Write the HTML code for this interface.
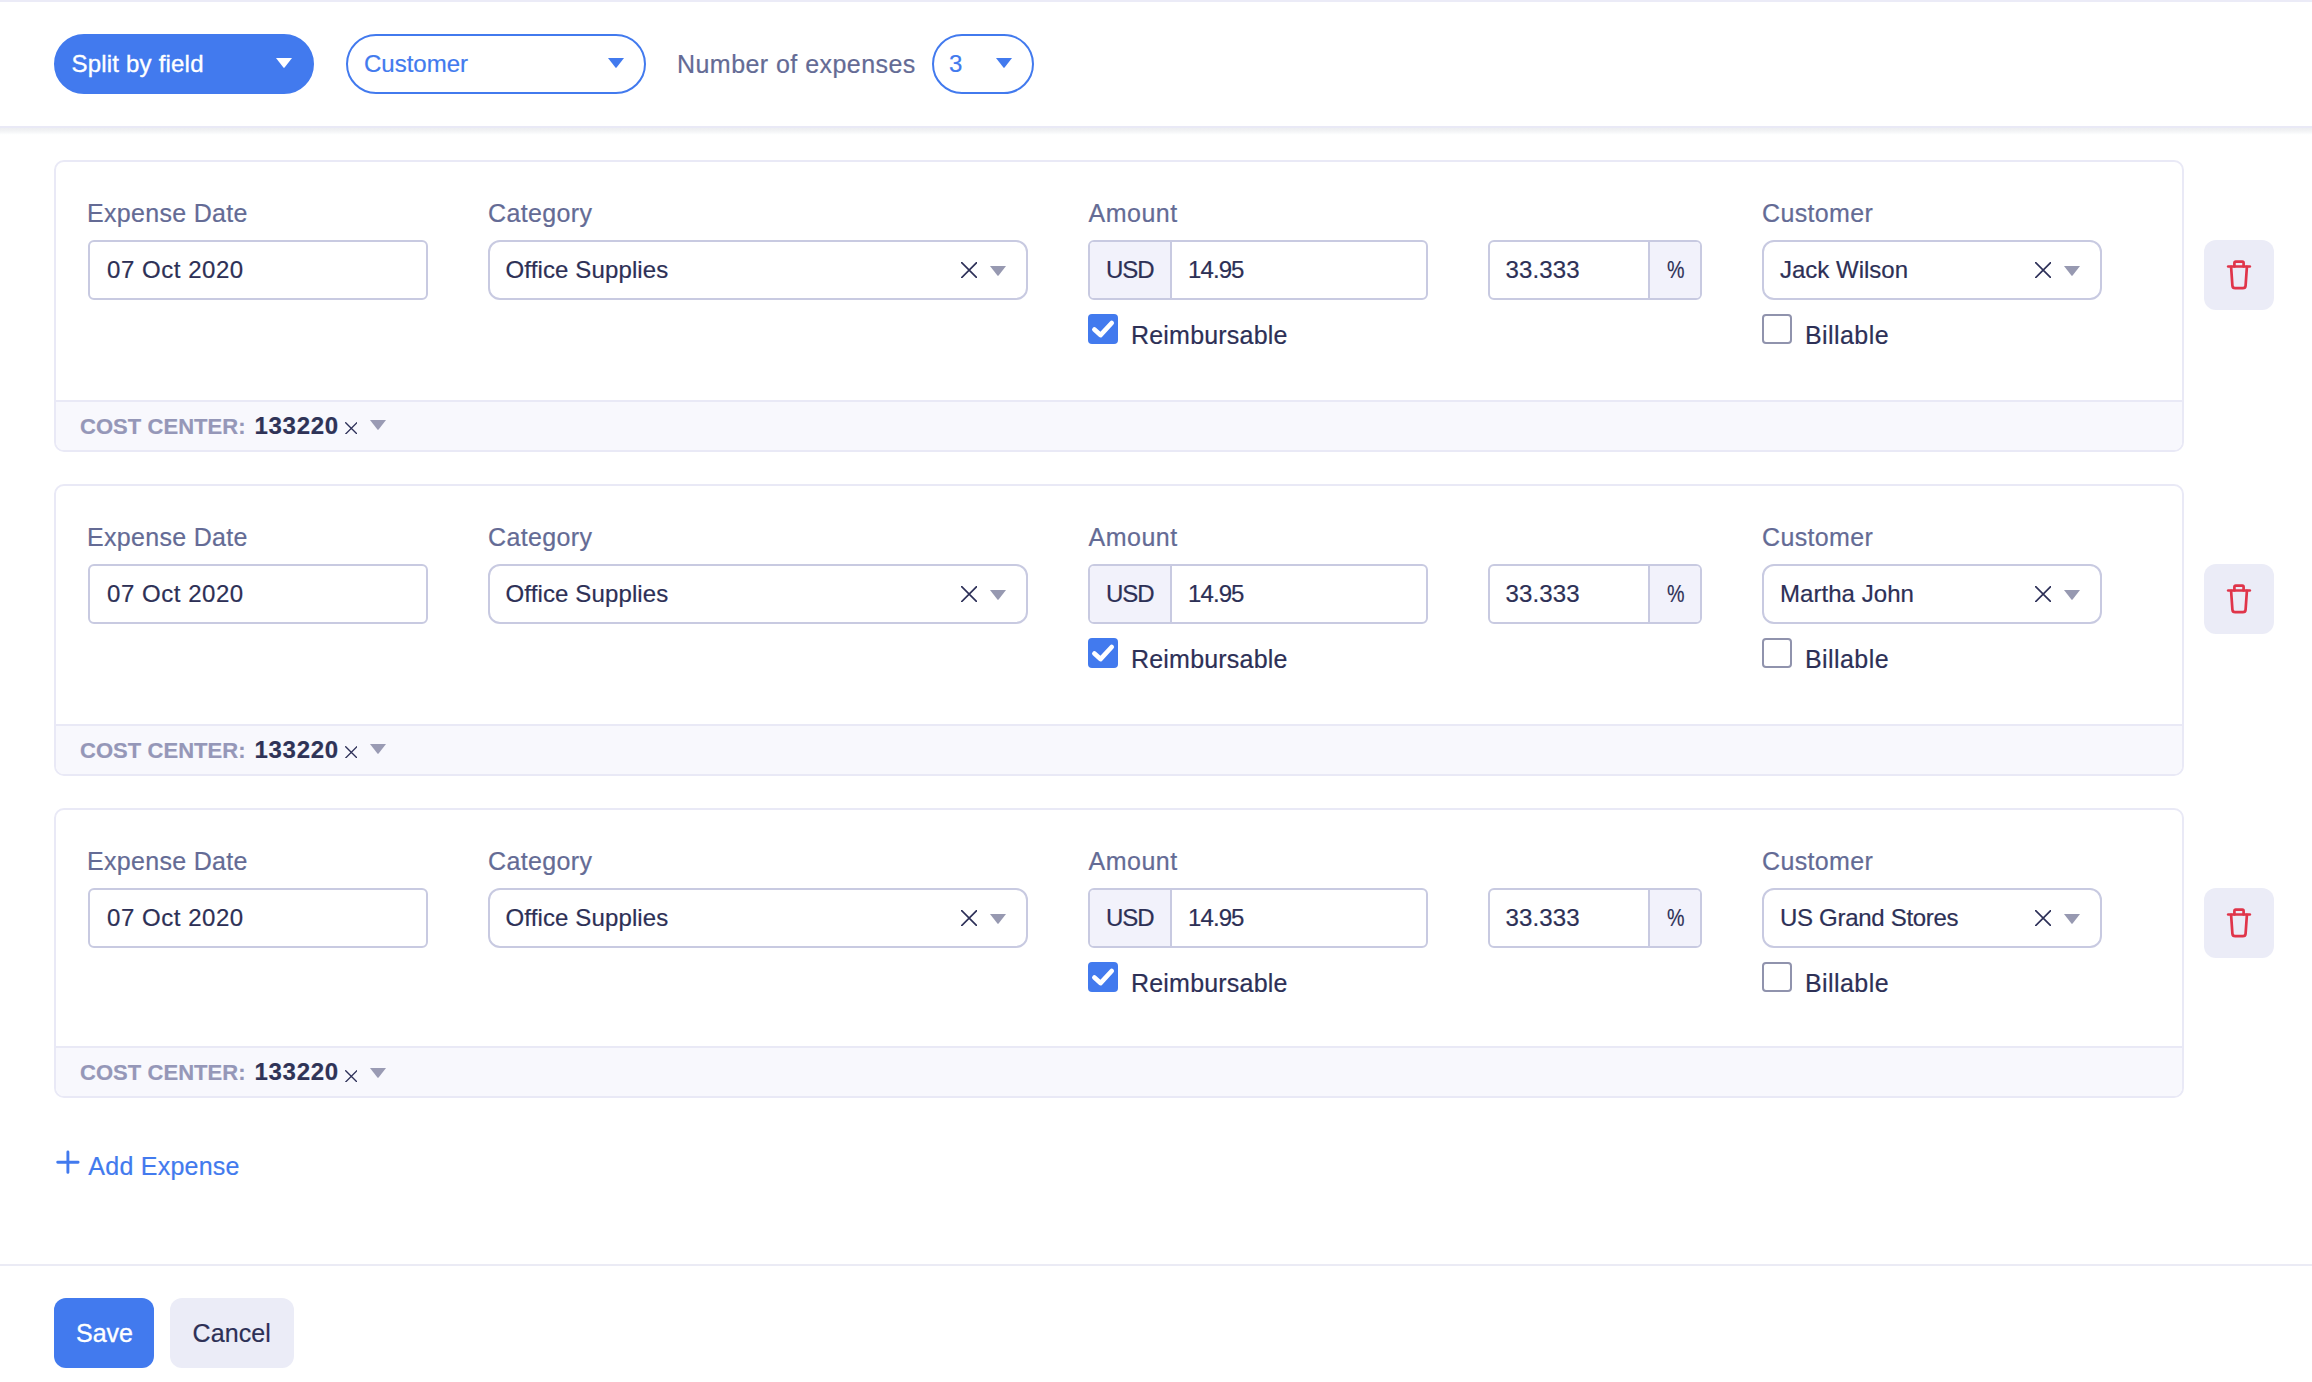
<!DOCTYPE html>
<html lang="en"><head><meta charset="utf-8"><title>Split Expense</title>
<style>
*{box-sizing:border-box;margin:0;padding:0}
html,body{width:2312px;height:1382px;overflow:hidden;background:#fff}
body{position:relative;font-family:"Liberation Sans",sans-serif;color:#2d3056;-webkit-font-smoothing:antialiased}
.abs{position:absolute}
.t{position:absolute;white-space:nowrap;line-height:30px;height:30px;-webkit-text-stroke:.2px currentColor}
.topline{position:absolute;left:0;top:0;width:2312px;height:2px;background:#ebebf7}
.header{position:absolute;left:0;top:0;width:2312px;height:128px;background:#fff;border-bottom:2px solid #e9e9f6}
.hshadow{position:absolute;left:0;top:128px;width:2312px;height:7px;background:linear-gradient(#edeef1,#f1f2f4 35%,#f8f9fa 70%,#fdfefe 90%,#fff)}
.pill{position:absolute;top:34px;height:60px;border-radius:30px;border:2px solid #427aee}
.pill.fill{background:#427aee}
.tri{position:absolute;width:16px;height:10px}
.card{position:absolute;left:54px;width:2130px;border:2px solid #e9e9f6;border-radius:10px;background:#fff;overflow:hidden}
.foot{position:absolute;left:0;bottom:0;width:100%;height:50px;background:#f8f8fd;border-top:2px solid #e9e9f6}
.lbl{color:#646b95}
.inp{position:absolute;top:78px;height:60px;border:2px solid #c8cae1;background:#fff;border-radius:6px}
.sel{border-radius:12px}
.addon{position:absolute;top:0;height:56px;background:#f2f2fb}
.cbx{position:absolute;width:30px;height:30px;border-radius:4px}
.cbx.on{background:#427aee}
.cbx.off{border:2px solid #9093ad;background:#fff}
.del{position:absolute;left:2204px;width:70px;height:70px;border-radius:12px;background:#ebecf7}
.btn{position:absolute;top:1298px;height:70px;border-radius:12px}
.sep{position:absolute;left:0;top:1264px;width:2312px;height:2px;background:#ebebf5}
</style></head>
<body>
<header class="header">
<div class="pill fill" style="left:54px;width:260px"><span class="t " style="left:15.5px;top:13px;font-size:24px;letter-spacing:0.2px;color:#fff;-webkit-text-stroke:.35px #fff">Split by field</span><svg class="tri" style="left:220px;top:22px" viewBox="0 0 16 10"><path d="M0 0H16L8.4 9.8h-.8z" fill="#fff"/></svg></div>
<div class="pill" style="left:346px;width:300px"><span class="t " style="left:16px;top:13px;font-size:24px;letter-spacing:0px;color:#427aee">Customer</span><svg class="tri" style="left:260px;top:22px" viewBox="0 0 16 10"><path d="M0 0H16L8.4 9.8h-.8z" fill="#427aee"/></svg></div>
<span class="t lbl" style="left:677px;top:49px;font-size:25px;letter-spacing:0.45px;">Number of expenses</span>
<div class="pill" style="left:932px;width:102px"><span class="t " style="left:15px;top:13px;font-size:24px;letter-spacing:0px;color:#427aee">3</span><svg class="tri" style="left:62px;top:22px" viewBox="0 0 16 10"><path d="M0 0H16L8.4 9.8h-.8z" fill="#427aee"/></svg></div>
</header><div class="hshadow"></div><div class="topline"></div>
<main>
<section class="card" style="top:160px;height:292px">
<span class="t lbl" style="left:31px;top:36px;font-size:25px;letter-spacing:0.3px;">Expense Date</span>
<span class="t lbl" style="left:432px;top:36px;font-size:25px;letter-spacing:0.35px;">Category</span>
<span class="t lbl" style="left:1032.5px;top:36px;font-size:25px;letter-spacing:0.5px;">Amount</span>
<span class="t lbl" style="left:1706px;top:36px;font-size:25px;letter-spacing:0.35px;">Customer</span>
<div class="inp" style="left:32px;width:340px"><span class="t " style="left:17px;top:13px;font-size:24px;letter-spacing:0.54px;">07 Oct 2020</span></div>
<div class="inp sel" style="left:432px;width:540px"><span class="t " style="left:15.5px;top:13px;font-size:24px;letter-spacing:0.13px;">Office Supplies</span><svg class="abs" style="left:470.79999999999995px;top:19.80000000000001px" width="16.3" height="16.3" viewBox="0 0 16.3 16.3"><path d="M.7 .7L15.600000000000001 15.600000000000001M15.600000000000001 .7L.7 15.600000000000001" stroke="#2d3058" stroke-width="1.65" stroke-linecap="round" fill="none"/></svg><svg class="tri" style="left:500px;top:24px" viewBox="0 0 16 10"><path d="M0 0H16L8.4 9.8h-.8z" fill="#9799b1"/></svg></div>
<div class="inp" style="left:1032px;width:340px;overflow:hidden"><div class="addon" style="left:0;width:82px;border-right:2px solid #c8cae1"><span class="t " style="left:16px;top:13px;font-size:24px;letter-spacing:-1.1px;">USD</span></div><span class="t " style="left:98px;top:13px;font-size:24px;letter-spacing:-0.9px;">14.95</span></div>
<div class="inp" style="left:1432px;width:214px;overflow:hidden"><span class="t " style="left:15.5px;top:13px;font-size:24px;letter-spacing:0.15px;">33.333</span><div class="addon" style="left:158px;width:52px;border-left:2px solid #c8cae1"><span class="t " style="left:16.5px;top:13px;font-size:24px;letter-spacing:0px;display:inline-block;transform:scaleX(.82);transform-origin:0 50%">%</span></div></div>
<div class="inp sel" style="left:1706px;width:340px"><span class="t " style="left:16px;top:13px;font-size:24px;letter-spacing:0px;">Jack Wilson</span><svg class="abs" style="left:270.5999999999999px;top:19.80000000000001px" width="16.3" height="16.3" viewBox="0 0 16.3 16.3"><path d="M.7 .7L15.600000000000001 15.600000000000001M15.600000000000001 .7L.7 15.600000000000001" stroke="#2d3058" stroke-width="1.65" stroke-linecap="round" fill="none"/></svg><svg class="tri" style="left:300px;top:24px" viewBox="0 0 16 10"><path d="M0 0H16L8.4 9.8h-.8z" fill="#9799b1"/></svg></div>
<div class="cbx on" style="left:1032px;top:152px"><svg width="30" height="30" viewBox="0 0 30 30"><path d="M6.4 15.6L12.5 21.1L23.7 9" stroke="#fff" stroke-width="4.7" stroke-linecap="round" stroke-linejoin="round" fill="none"/></svg></div>
<span class="t " style="left:1075px;top:158.39999999999998px;font-size:25px;letter-spacing:0.2px;">Reimbursable</span>
<div class="cbx off" style="left:1706px;top:152px"></div>
<span class="t " style="left:1749px;top:158.39999999999998px;font-size:25px;letter-spacing:0.42px;">Billable</span>
<div class="foot"><span class="t " style="left:24px;top:10px;font-size:22px;letter-spacing:0.05px;font-weight:bold;color:#9597b8">COST CENTER:</span><span class="t " style="left:198.5px;top:9px;font-size:24px;letter-spacing:0.7px;font-weight:bold;color:#2f3357">133220</span><svg class="abs" style="left:288.7px;top:19.600000000000023px" width="12.6" height="12.6" viewBox="0 0 12.6 12.6"><path d="M.7 .7L11.9 11.9M11.9 .7L.7 11.9" stroke="#2d3058" stroke-width="1.35" stroke-linecap="round" fill="none"/></svg><svg class="tri" style="left:314px;top:18px" viewBox="0 0 16 10"><path d="M0 0H16L8.4 9.8h-.8z" fill="#9a9bb4"/></svg></div>
</section>
<div class="del" style="top:240px"><svg width="70" height="70" viewBox="0 0 70 70" fill="none" stroke="#e0354a" stroke-width="2.7" stroke-linecap="round" stroke-linejoin="round"><path d="M24.2 26.5H45.8"/><path d="M30.4 26.5V22.9a1.2 1.2 0 0 1 1.2-1.2h6.8a1.2 1.2 0 0 1 1.2 1.2V26.5"/><path d="M27.1 26.8L28.4 45.6a2.8 2.8 0 0 0 2.8 2.6h7.6a2.8 2.8 0 0 0 2.8-2.6L42.9 26.8"/></svg></div>
<section class="card" style="top:484px;height:292px">
<span class="t lbl" style="left:31px;top:36px;font-size:25px;letter-spacing:0.3px;">Expense Date</span>
<span class="t lbl" style="left:432px;top:36px;font-size:25px;letter-spacing:0.35px;">Category</span>
<span class="t lbl" style="left:1032.5px;top:36px;font-size:25px;letter-spacing:0.5px;">Amount</span>
<span class="t lbl" style="left:1706px;top:36px;font-size:25px;letter-spacing:0.35px;">Customer</span>
<div class="inp" style="left:32px;width:340px"><span class="t " style="left:17px;top:13px;font-size:24px;letter-spacing:0.54px;">07 Oct 2020</span></div>
<div class="inp sel" style="left:432px;width:540px"><span class="t " style="left:15.5px;top:13px;font-size:24px;letter-spacing:0.13px;">Office Supplies</span><svg class="abs" style="left:470.79999999999995px;top:19.80000000000001px" width="16.3" height="16.3" viewBox="0 0 16.3 16.3"><path d="M.7 .7L15.600000000000001 15.600000000000001M15.600000000000001 .7L.7 15.600000000000001" stroke="#2d3058" stroke-width="1.65" stroke-linecap="round" fill="none"/></svg><svg class="tri" style="left:500px;top:24px" viewBox="0 0 16 10"><path d="M0 0H16L8.4 9.8h-.8z" fill="#9799b1"/></svg></div>
<div class="inp" style="left:1032px;width:340px;overflow:hidden"><div class="addon" style="left:0;width:82px;border-right:2px solid #c8cae1"><span class="t " style="left:16px;top:13px;font-size:24px;letter-spacing:-1.1px;">USD</span></div><span class="t " style="left:98px;top:13px;font-size:24px;letter-spacing:-0.9px;">14.95</span></div>
<div class="inp" style="left:1432px;width:214px;overflow:hidden"><span class="t " style="left:15.5px;top:13px;font-size:24px;letter-spacing:0.15px;">33.333</span><div class="addon" style="left:158px;width:52px;border-left:2px solid #c8cae1"><span class="t " style="left:16.5px;top:13px;font-size:24px;letter-spacing:0px;display:inline-block;transform:scaleX(.82);transform-origin:0 50%">%</span></div></div>
<div class="inp sel" style="left:1706px;width:340px"><span class="t " style="left:16px;top:13px;font-size:24px;letter-spacing:0.05px;">Martha John</span><svg class="abs" style="left:270.5999999999999px;top:19.80000000000001px" width="16.3" height="16.3" viewBox="0 0 16.3 16.3"><path d="M.7 .7L15.600000000000001 15.600000000000001M15.600000000000001 .7L.7 15.600000000000001" stroke="#2d3058" stroke-width="1.65" stroke-linecap="round" fill="none"/></svg><svg class="tri" style="left:300px;top:24px" viewBox="0 0 16 10"><path d="M0 0H16L8.4 9.8h-.8z" fill="#9799b1"/></svg></div>
<div class="cbx on" style="left:1032px;top:152px"><svg width="30" height="30" viewBox="0 0 30 30"><path d="M6.4 15.6L12.5 21.1L23.7 9" stroke="#fff" stroke-width="4.7" stroke-linecap="round" stroke-linejoin="round" fill="none"/></svg></div>
<span class="t " style="left:1075px;top:158.39999999999998px;font-size:25px;letter-spacing:0.2px;">Reimbursable</span>
<div class="cbx off" style="left:1706px;top:152px"></div>
<span class="t " style="left:1749px;top:158.39999999999998px;font-size:25px;letter-spacing:0.42px;">Billable</span>
<div class="foot"><span class="t " style="left:24px;top:10px;font-size:22px;letter-spacing:0.05px;font-weight:bold;color:#9597b8">COST CENTER:</span><span class="t " style="left:198.5px;top:9px;font-size:24px;letter-spacing:0.7px;font-weight:bold;color:#2f3357">133220</span><svg class="abs" style="left:288.7px;top:19.600000000000023px" width="12.6" height="12.6" viewBox="0 0 12.6 12.6"><path d="M.7 .7L11.9 11.9M11.9 .7L.7 11.9" stroke="#2d3058" stroke-width="1.35" stroke-linecap="round" fill="none"/></svg><svg class="tri" style="left:314px;top:18px" viewBox="0 0 16 10"><path d="M0 0H16L8.4 9.8h-.8z" fill="#9a9bb4"/></svg></div>
</section>
<div class="del" style="top:564px"><svg width="70" height="70" viewBox="0 0 70 70" fill="none" stroke="#e0354a" stroke-width="2.7" stroke-linecap="round" stroke-linejoin="round"><path d="M24.2 26.5H45.8"/><path d="M30.4 26.5V22.9a1.2 1.2 0 0 1 1.2-1.2h6.8a1.2 1.2 0 0 1 1.2 1.2V26.5"/><path d="M27.1 26.8L28.4 45.6a2.8 2.8 0 0 0 2.8 2.6h7.6a2.8 2.8 0 0 0 2.8-2.6L42.9 26.8"/></svg></div>
<section class="card" style="top:808px;height:290px">
<span class="t lbl" style="left:31px;top:36px;font-size:25px;letter-spacing:0.3px;">Expense Date</span>
<span class="t lbl" style="left:432px;top:36px;font-size:25px;letter-spacing:0.35px;">Category</span>
<span class="t lbl" style="left:1032.5px;top:36px;font-size:25px;letter-spacing:0.5px;">Amount</span>
<span class="t lbl" style="left:1706px;top:36px;font-size:25px;letter-spacing:0.35px;">Customer</span>
<div class="inp" style="left:32px;width:340px"><span class="t " style="left:17px;top:13px;font-size:24px;letter-spacing:0.54px;">07 Oct 2020</span></div>
<div class="inp sel" style="left:432px;width:540px"><span class="t " style="left:15.5px;top:13px;font-size:24px;letter-spacing:0.13px;">Office Supplies</span><svg class="abs" style="left:470.79999999999995px;top:19.80000000000001px" width="16.3" height="16.3" viewBox="0 0 16.3 16.3"><path d="M.7 .7L15.600000000000001 15.600000000000001M15.600000000000001 .7L.7 15.600000000000001" stroke="#2d3058" stroke-width="1.65" stroke-linecap="round" fill="none"/></svg><svg class="tri" style="left:500px;top:24px" viewBox="0 0 16 10"><path d="M0 0H16L8.4 9.8h-.8z" fill="#9799b1"/></svg></div>
<div class="inp" style="left:1032px;width:340px;overflow:hidden"><div class="addon" style="left:0;width:82px;border-right:2px solid #c8cae1"><span class="t " style="left:16px;top:13px;font-size:24px;letter-spacing:-1.1px;">USD</span></div><span class="t " style="left:98px;top:13px;font-size:24px;letter-spacing:-0.9px;">14.95</span></div>
<div class="inp" style="left:1432px;width:214px;overflow:hidden"><span class="t " style="left:15.5px;top:13px;font-size:24px;letter-spacing:0.15px;">33.333</span><div class="addon" style="left:158px;width:52px;border-left:2px solid #c8cae1"><span class="t " style="left:16.5px;top:13px;font-size:24px;letter-spacing:0px;display:inline-block;transform:scaleX(.82);transform-origin:0 50%">%</span></div></div>
<div class="inp sel" style="left:1706px;width:340px"><span class="t " style="left:16px;top:13px;font-size:24px;letter-spacing:-0.3px;">US Grand Stores</span><svg class="abs" style="left:270.5999999999999px;top:19.80000000000001px" width="16.3" height="16.3" viewBox="0 0 16.3 16.3"><path d="M.7 .7L15.600000000000001 15.600000000000001M15.600000000000001 .7L.7 15.600000000000001" stroke="#2d3058" stroke-width="1.65" stroke-linecap="round" fill="none"/></svg><svg class="tri" style="left:300px;top:24px" viewBox="0 0 16 10"><path d="M0 0H16L8.4 9.8h-.8z" fill="#9799b1"/></svg></div>
<div class="cbx on" style="left:1032px;top:152px"><svg width="30" height="30" viewBox="0 0 30 30"><path d="M6.4 15.6L12.5 21.1L23.7 9" stroke="#fff" stroke-width="4.7" stroke-linecap="round" stroke-linejoin="round" fill="none"/></svg></div>
<span class="t " style="left:1075px;top:158.39999999999998px;font-size:25px;letter-spacing:0.2px;">Reimbursable</span>
<div class="cbx off" style="left:1706px;top:152px"></div>
<span class="t " style="left:1749px;top:158.39999999999998px;font-size:25px;letter-spacing:0.42px;">Billable</span>
<div class="foot"><span class="t " style="left:24px;top:10px;font-size:22px;letter-spacing:0.05px;font-weight:bold;color:#9597b8">COST CENTER:</span><span class="t " style="left:198.5px;top:9px;font-size:24px;letter-spacing:0.7px;font-weight:bold;color:#2f3357">133220</span><svg class="abs" style="left:288.7px;top:21.600000000000023px" width="12.6" height="12.6" viewBox="0 0 12.6 12.6"><path d="M.7 .7L11.9 11.9M11.9 .7L.7 11.9" stroke="#2d3058" stroke-width="1.35" stroke-linecap="round" fill="none"/></svg><svg class="tri" style="left:314px;top:20px" viewBox="0 0 16 10"><path d="M0 0H16L8.4 9.8h-.8z" fill="#9a9bb4"/></svg></div>
</section>
<div class="del" style="top:888px"><svg width="70" height="70" viewBox="0 0 70 70" fill="none" stroke="#e0354a" stroke-width="2.7" stroke-linecap="round" stroke-linejoin="round"><path d="M24.2 26.5H45.8"/><path d="M30.4 26.5V22.9a1.2 1.2 0 0 1 1.2-1.2h6.8a1.2 1.2 0 0 1 1.2 1.2V26.5"/><path d="M27.1 26.8L28.4 45.6a2.8 2.8 0 0 0 2.8 2.6h7.6a2.8 2.8 0 0 0 2.8-2.6L42.9 26.8"/></svg></div>
<svg class="abs" style="left:54px;top:1148px" width="28" height="28" viewBox="0 0 28 28"><path d="M13.9 4V24.4M3.7 14.2H24.1" stroke="#427aee" stroke-width="2.9" stroke-linecap="round"/></svg>
<span class="t " style="left:88.3px;top:1150.5px;font-size:25px;letter-spacing:0.25px;color:#427aee">Add Expense</span>
</main>
<div class="sep"></div>
<div class="btn" style="left:54px;width:100px;background:#427aee"><span class="t " style="left:22px;top:20px;font-size:25px;letter-spacing:0px;color:#fff;-webkit-text-stroke:.35px #fff">Save</span></div>
<div class="btn" style="left:170px;width:124px;background:#ebecf7"><span class="t " style="left:22.5px;top:20px;font-size:25px;letter-spacing:0.1px;">Cancel</span></div>
</body></html>
